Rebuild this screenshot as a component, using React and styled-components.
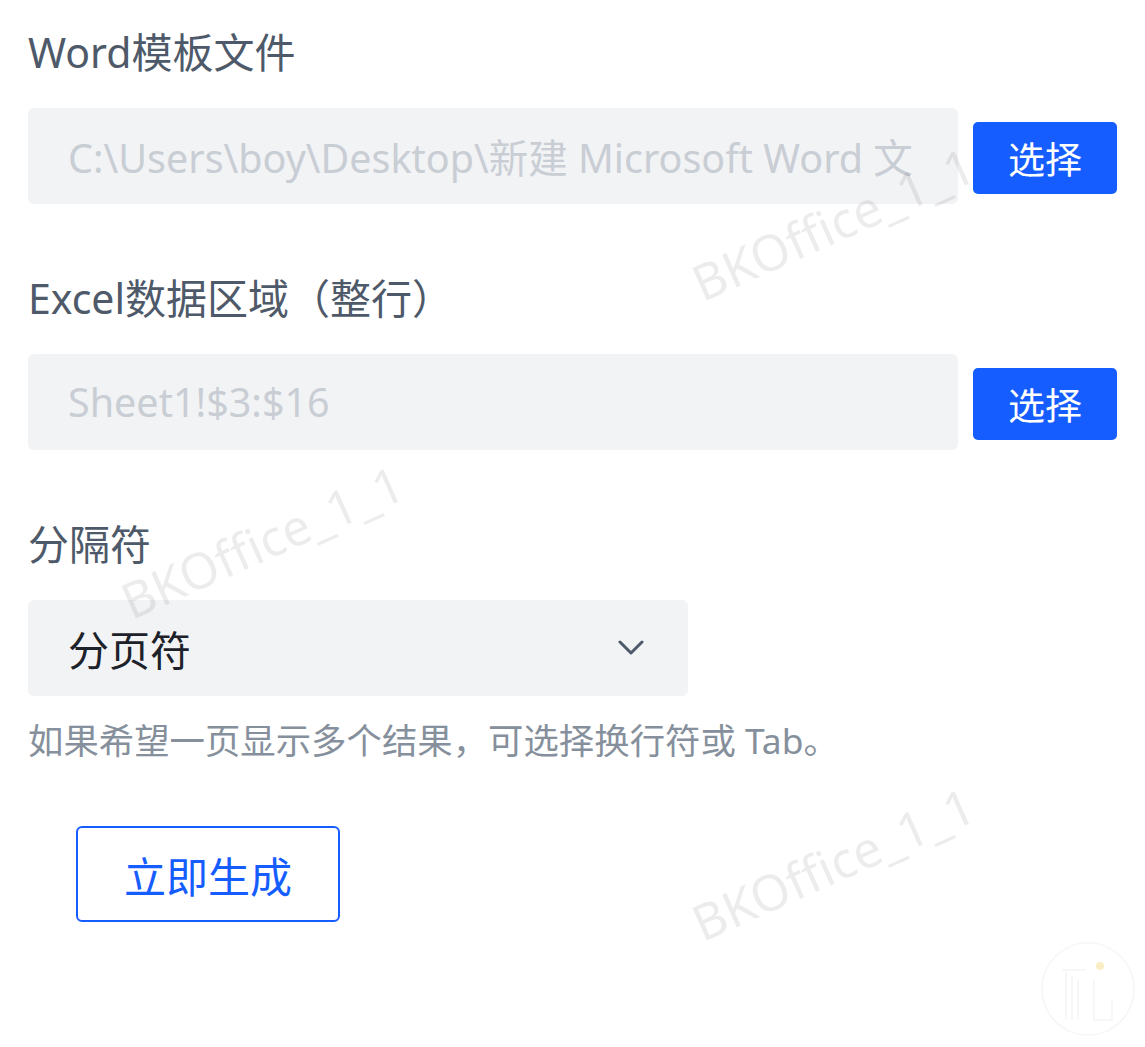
import React from 'react'
import styled, { createGlobalStyle } from 'styled-components'

const GlobalStyle = createGlobalStyle`
  html, body {
    margin: 0;
    padding: 0;
    background: #fff;
  }
  body {
    font-family: "Noto Sans", "Noto Sans CJK SC", sans-serif;
  }
`

const Page = styled.div`
  position: relative;
  width: 1145px;
  height: 1047px;
  overflow: hidden;
  box-sizing: border-box;
  padding: 24px 28px 0 28px;
`

const Field = styled.div`
  display: flex;
  flex-direction: column;
  margin-bottom: 66px;
`

const Label = styled.div`
  font-size: 41px;
  line-height: 56px;
  color: #4e5969;
  margin-bottom: 28px;
`

const Row = styled.div`
  display: flex;
  align-items: flex-start;
  gap: 15px;
`

const Input = styled.div`
  flex: 1;
  height: 96px;
  box-sizing: border-box;
  padding: 0 40px;
  display: flex;
  align-items: center;
  background: #f2f3f5;
  border-radius: 6px;
  font-size: 39.5px;
  color: #c9cdd4;
  white-space: nowrap;
  overflow: hidden;
`

const PickButton = styled.button`
  margin-top: 14px;
  width: 144px;
  height: 72px;
  border: none;
  border-radius: 5px;
  background: #165dff;
  color: #fff;
  font-family: inherit;
  font-size: 37px;
  padding: 0;
`

const Select = styled.div`
  width: 660px;
  height: 96px;
  box-sizing: border-box;
  padding: 0 44px 0 40px;
  display: flex;
  align-items: center;
  justify-content: space-between;
  background: #f2f3f5;
  border-radius: 6px;
  font-size: 41px;
  color: #1d2129;
`

const Hint = styled.div`
  margin-top: 20px;
  font-size: 35.4px;
  line-height: 48px;
  color: #86909c;
`

const SelectField = styled.div`
  display: flex;
  flex-direction: column;
`

const GenerateButton = styled.button`
  margin: 62px 0 0 48px;
  width: 264px;
  height: 96px;
  box-sizing: border-box;
  border: 2.5px solid #165dff;
  border-radius: 6px;
  background: #fff;
  color: #165dff;
  font-family: inherit;
  font-size: 42px;
  padding: 0;
`

const Watermark = styled.div`
  position: absolute;
  left: ${p => p.x}px;
  top: ${p => p.y}px;
  font-family: "Noto Sans", sans-serif;
  font-size: 50px;
  color: rgba(0, 0, 0, 0.075);
  transform: rotate(-24deg);
  transform-origin: left bottom;
  white-space: nowrap;
  pointer-events: none;
  line-height: 1;
`

const Logo = styled.svg`
  position: absolute;
  right: 0;
  bottom: 0;
`

const Chevron = () => (
  <svg width="26" height="16" viewBox="0 0 26 16" fill="none">
    <path d="M2 2 L13 13 L24 2" stroke="#4e5969" strokeWidth="3" strokeLinecap="round" strokeLinejoin="round" />
  </svg>
)

export default function App() {
  return (
    <>
      <GlobalStyle />
      <Page>
        <Field>
          <Label>Word模板文件</Label>
          <Row>
            <Input>C:\Users\boy\Desktop\新建 Microsoft Word 文</Input>
            <PickButton>选择</PickButton>
          </Row>
        </Field>
        <Field>
          <Label>Excel数据区域（整行）</Label>
          <Row>
            <Input>Sheet1!$3:$16</Input>
            <PickButton>选择</PickButton>
          </Row>
        </Field>
        <SelectField>
          <Label>分隔符</Label>
          <Select>
            <span>分页符</span>
            <Chevron />
          </Select>
          <Hint>如果希望一页显示多个结果，可选择换行符或 Tab。</Hint>
        </SelectField>
        <GenerateButton>立即生成</GenerateButton>

        <Watermark x={705} y={258}>BKOffice_1_1</Watermark>
        <Watermark x={134} y={576}>BKOffice_1_1</Watermark>
        <Watermark x={705} y={898}>BKOffice_1_1</Watermark>

        <Logo width="145" height="127" viewBox="0 0 145 127" fill="none">
          <circle cx="88" cy="69" r="46" stroke="#f6f6f6" strokeWidth="1.5" />
          <path d="M62 50 L86 50 M66 52 L66 100 M72 56 L72 100 M78 60 L78 100 M94 60 L94 100 L112 100 L112 80" stroke="#f5f5f5" strokeWidth="1.5" />
          <circle cx="100" cy="46" r="4" fill="#fbeec4" />
        </Logo>
      </Page>
    </>
  )
}
